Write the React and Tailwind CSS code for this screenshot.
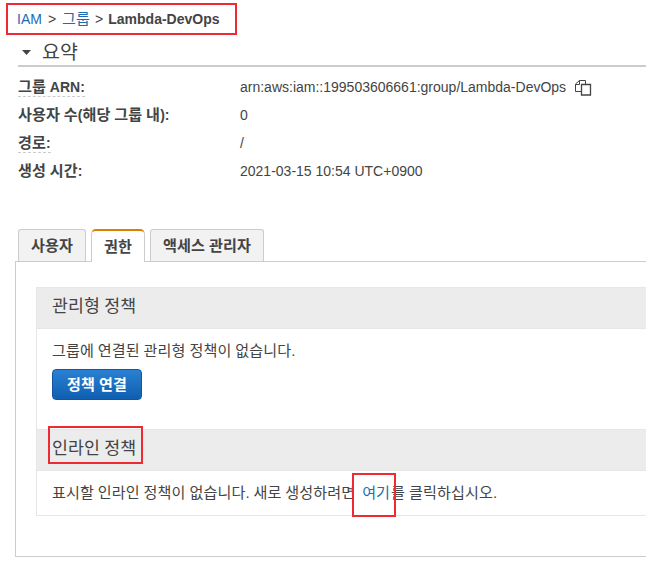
import React from 'react';

const Ko = ({ children }) => (
  <span className="text-[1.08em] tracking-[0.006em] [word-spacing:-0.03em]">{children}</span>
);

const CopyIcon = () => (
  <svg width="17" height="17" viewBox="0 0 17 17" fill="none" stroke="#444" strokeWidth="1" className="ml-[9px]">
    <path d="M6 12.5H0.5V5L4.5 1.5H10.5V5" />
    <path d="M4.5 1.5V5.5H0.5" />
    <path d="M6.5 5.5H15.5V16H6.5Z" strokeWidth="1.3" />
  </svg>
);

const Row = ({ label, dotted, children }) => (
  <div className="flex h-7 items-center">
    <div className="w-[222px] font-bold">
      <span className={dotted ? 'border-b border-dashed border-[#ccc] pb-px' : ''}>{label}</span>
    </div>
    <div className="flex items-center">{children}</div>
  </div>
);

const Tab = ({ active, className, children }) => (
  <div
    className={
      active
        ? 'relative z-10 -mb-px flex h-[33px] items-center justify-center rounded-t-[5px] border-x border-t-2 border-[#ccc] border-t-[#dd7f00] bg-white font-bold ' + className
        : 'flex h-[32px] items-center justify-center rounded-t-[3px] border-x border-t border-[#ccc] bg-[#f2f2f2] font-bold ' + className
    }
  >
    {children}
  </div>
);

const PolicyHeader = ({ children }) => (
  <div className="flex h-[42px] items-center border-y border-[#e6e6e6] bg-[#ececec] pb-[3px] pl-[15px] text-base">{children}</div>
);

export default function App() {
  return (
    <div className="relative h-[570px] w-[646px] overflow-hidden bg-white text-[14px] leading-5 text-[#444] [font-family:'Liberation_Sans','Noto_Sans_CJK_KR',sans-serif]">
      {/* breadcrumb */}
      <div className="pl-[6px] pt-[3px]">
        <div className="flex h-8 w-[231px] items-center border-2 border-[#ee2a35] pl-[9px]">
          <span className="text-[#1b6cb5]">IAM</span>
          <span className="mx-[6px]">&gt;</span>
          <span className="text-[#1b6cb5]"><Ko>그룹</Ko></span>
          <span className="mx-[5px]">&gt;</span>
          <span className="font-bold">Lambda-DevOps</span>
        </div>
      </div>

      {/* summary */}
      <div className="ml-[18px]">
        <div className="flex h-[32px] items-center border-b-2 border-[#ccc] pt-[3px] text-[18px]">
          <svg width="10" height="6" viewBox="0 0 10 6" className="ml-[4px] mr-[10px] mt-[2px]">
            <polygon points="0,0 9,0 4.5,5" fill="#444" />
          </svg>
          <Ko>요약</Ko>
        </div>
        <div className="mt-[6px]">
          <Row label={<><Ko>그룹</Ko> ARN:</>} dotted>
            arn:aws:iam::199503606661:group/Lambda-DevOps
            <CopyIcon />
          </Row>
          <Row label={<><Ko>사용자 수</Ko>(<Ko>해당 그룹 내</Ko>):</>}>0</Row>
          <Row label={<><Ko>경로</Ko>:</>} dotted>/</Row>
          <Row label={<><Ko>생성 시간</Ko>:</>}>2021-03-15 10:54 UTC+0900</Row>
        </div>
      </div>

      {/* tabs */}
      <div className="ml-[18px] mt-[44px] flex items-end gap-[5px]">
        <Tab className="w-[68px]"><Ko>사용자</Ko></Tab>
        <Tab active className="w-[54px]"><Ko>권한</Ko></Tab>
        <Tab className="w-[114px]"><Ko>액세스 관리자</Ko></Tab>
      </div>

      {/* panel */}
      <div className="ml-[15px] h-[296px] w-[700px] border border-[#ccc] pl-5 pt-[25px]">
        <div className="border-b border-l border-[#e6e6e6]">
          <PolicyHeader><Ko>관리형 정책</Ko></PolicyHeader>
          <div className="h-[100px] pl-[15px] pt-3">
            <p><Ko>그룹에 연결된 관리형 정책이 없습니다.</Ko></p>
            <button className="mt-[8px] h-[31px] w-[90px] rounded-[4px] border border-[#15559f] bg-gradient-to-b from-[#2a80d2] to-[#0f5fb0] font-bold text-white">
              <Ko>정책 연결</Ko>
            </button>
          </div>
          <div className="relative">
            <PolicyHeader><Ko>인라인 정책</Ko></PolicyHeader>
            <div className="absolute left-[11px] top-[-3px] h-[38px] w-[95px] border-2 border-[#ee2a35]" />
          </div>
          <div className="flex h-[44px] items-center pb-px pl-[15px]">
            <span className="whitespace-pre">
              <Ko>표시할 인라인 정책이 없습니다. 새로 생성하려면 </Ko>
              <span className="relative pl-[3px] pr-[1px] text-[#1b6cb5]">
                <Ko>여기</Ko>
                <span className="absolute left-[-7px] top-[-12px] h-[44px] w-[44px] border-2 border-[#ee2a35]" />
              </span>
              <Ko>를 클릭하십시오.</Ko>
            </span>
          </div>
        </div>
      </div>
    </div>
  );
}
